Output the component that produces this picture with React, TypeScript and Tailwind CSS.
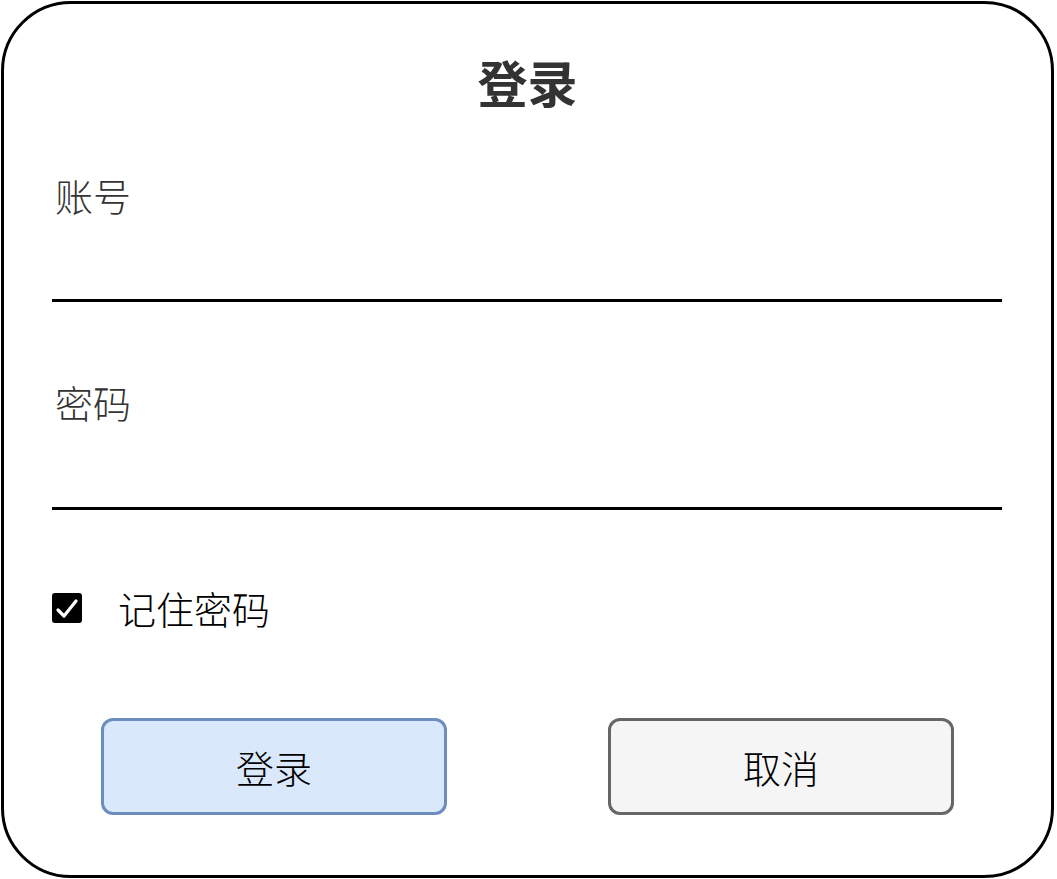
export default function App() {
  const cjk = { fontFamily: '"Noto Sans CJK SC", "Noto Sans", sans-serif' };
  return (
    <div className="w-[1057px] h-[879px] bg-white" style={cjk}>
      <div className="ml-[1px] mt-[1px] w-[1053px] h-[877px] border-[3px] border-black rounded-[70px] flex flex-col px-[48px]">
        <div className="mt-[42px] h-[70px] flex items-center justify-center text-[50px] font-bold text-[#333333] leading-none">登录</div>
        <div className="mt-[60px] text-[38px] leading-none text-[#333333] pl-[3px] font-light">账号</div>
        <div className="mt-[85px] h-[3px] bg-black w-[950px]" />
        <div className="mt-[81px] text-[38px] leading-none text-[#333333] pl-[3px] font-light">密码</div>
        <div className="mt-[86px] h-[3px] bg-black w-[950px]" />
        <div className="mt-[79px] flex items-center">
          <div className="w-[30px] h-[30px] bg-black rounded-[3px] flex items-center justify-center">
            <svg width="30" height="30" viewBox="0 0 30 30" fill="none" stroke="white" strokeWidth="3.2" strokeLinecap="round" strokeLinejoin="round">
              <path d="M6 17l6 6L24 8" />
            </svg>
          </div>
          <div className="ml-[36px] text-[38px] leading-none text-black font-light">记住密码</div>
        </div>
        <div className="mt-[91px] flex pl-[49px] gap-[161px]">
          <div className="w-[346px] h-[97px] border-[3px] border-[#6c8ebf] bg-[#dae8fc] rounded-[12px] flex items-center justify-center text-[38px] text-black font-light">登录</div>
          <div className="w-[346px] h-[97px] border-[3px] border-[#666666] bg-[#f5f5f5] rounded-[12px] flex items-center justify-center text-[38px] text-black font-light">取消</div>
        </div>
      </div>
    </div>
  );
}
